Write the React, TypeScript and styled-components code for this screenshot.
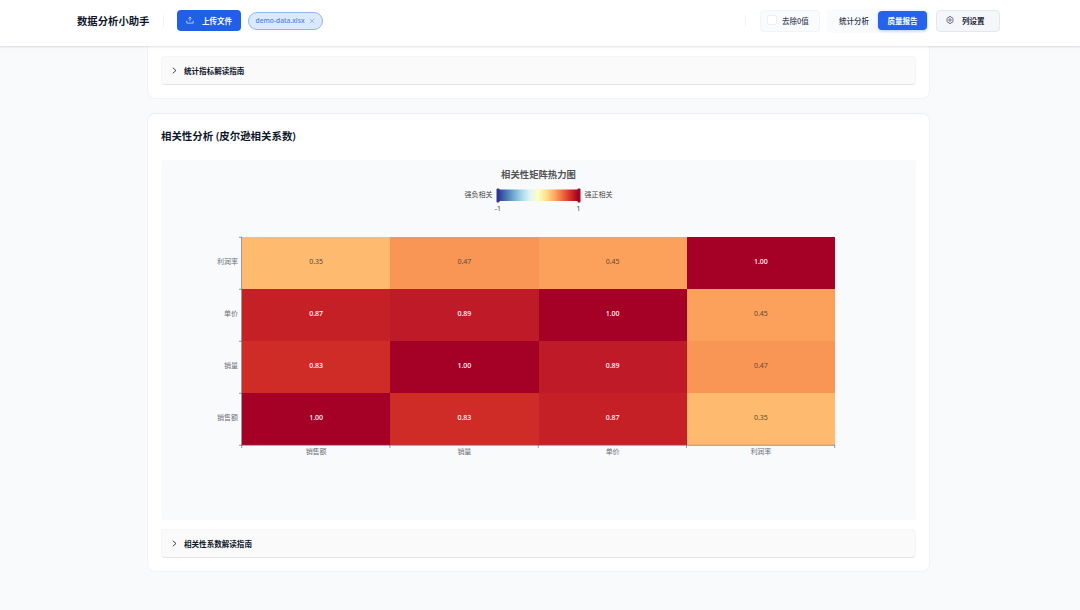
import React from "react";
import styled, { createGlobalStyle, css } from "styled-components";

const sans = '"Noto Sans", "Noto Sans CJK SC", sans-serif';

const GlobalStyle = createGlobalStyle`
  * { box-sizing: border-box; }
  body {
    margin: 0;
    background: #f8fafc;
    color: #0f172a;
    font-family: ${sans};
    overflow: hidden;
  }
  button { font-family: inherit; margin: 0; }
`;

const Page = styled.div`
  height: 610px;
  display: flex;
  flex-direction: column;
  overflow: hidden;
`;

const Header = styled.header`
  height: 46px;
  flex: none;
  display: flex;
  align-items: center;
  justify-content: space-between;
  padding: 0 80px 5px 77px;
  background: #fff;
  box-shadow: 0 1px 2px rgba(15, 23, 42, 0.14);
  z-index: 1;
`;

const Group = styled.div`
  display: flex;
  align-items: center;
`;

const Brand = styled.h1`
  margin: 0;
  width: 86px;
  font-size: 10.35px;
  line-height: 16px;
  font-weight: 600;
  white-space: nowrap;
`;

const Divider = styled.span<{ $gap: number }>`
  width: 1px;
  height: 12px;
  margin-right: ${(p) => p.$gap}px;
  background: #eff2f6;
`;

const UploadButton = styled.button`
  width: 64px;
  height: 21px;
  display: flex;
  align-items: center;
  gap: 8px;
  padding: 0 0 1px 9px;
  border: 0;
  border-radius: 4px;
  background: #2060e8;
  color: #fff;
  font-size: 7.5px;
  font-weight: 700;
  white-space: nowrap;
`;

const FileTag = styled.span`
  width: 75px;
  height: 18px;
  margin-left: 7px;
  display: flex;
  align-items: center;
  justify-content: space-between;
  padding: 0 7px 0 6.5px;
  border: 1px solid #91b4f6;
  border-radius: 9px;
  background: #dbe9fe;
  color: #4d80ec;
  font-size: 6.7px;
  font-weight: 500;
  white-space: nowrap;
`;

const CheckField = styled.label`
  width: 60px;
  height: 22px;
  display: flex;
  align-items: center;
  gap: 5px;
  padding: 0 0 1px 6px;
  border: 1px solid #f1f4f8;
  border-radius: 4px;
  background: #fafbfd;
  color: #414b5b;
  font-family: "Noto Sans CJK SC", sans-serif;
  font-size: 7.5px;
  font-weight: 500;
  white-space: nowrap;
`;

const Box = styled.span`
  width: 10px;
  height: 10px;
  border: 1px solid #edf0f4;
  border-radius: 2px;
  background: #fff;
`;

const Tabs = styled.div`
  width: 101px;
  height: 24px;
  display: flex;
  align-items: center;
  margin-left: 7px;
  padding-left: 1px;
  border-radius: 4px;
  background: #f9fbfd;
`;

const Tab = styled.button<{ $active?: boolean }>`
  width: ${(p) => (p.$active ? 49 : 50)}px;
  height: 19px;
  padding: 0 0 1px;
  padding-left: ${(p) => (p.$active ? 0 : 2)}px;
  border: 0;
  border-radius: 4px;
  background: transparent;
  color: #2f3949;
  font-size: 7.5px;
  font-weight: 500;
  ${(p) =>
    p.$active &&
    css`
      background: #2563eb;
      color: #fff;
      font-weight: 700;
      box-shadow: 0 1px 3px rgba(37, 99, 235, 0.3);
    `}
`;

const ColumnsButton = styled.button`
  width: 64px;
  height: 22px;
  display: flex;
  align-items: center;
  gap: 8px;
  margin-left: 8px;
  padding: 0 0 1px 9px;
  border: 1px solid #e2e8f0;
  border-radius: 4px;
  background: #f4f6f9;
  color: #172033;
  font-size: 7.5px;
  font-weight: 600;
  white-space: nowrap;
`;

const Main = styled.main`
  width: 783px;
  margin-left: 147px;
  display: flex;
  flex-direction: column;
  gap: 14px;
`;

const Card = styled.section<{ $clipped?: boolean }>`
  display: flex;
  flex-direction: column;
  padding: ${(p) => (p.$clipped ? "10px 13px 13px" : "13px 13px 13px")};
  border: 1px solid #f0f3f7;
  border-top: ${(p) => (p.$clipped ? "0" : "1px solid #e9edf2")};
  border-radius: ${(p) => (p.$clipped ? "0 0 8px 8px" : "8px")};
  background: #fff;
`;

const CardTitle = styled.h2`
  height: 18px;
  margin: 0 0 15px;
  font-size: 10.45px;
  line-height: 18px;
  font-weight: 600;
`;

const Guide = styled.div<{ $gap?: number }>`
  height: 29px;
  display: flex;
  align-items: center;
  gap: 7px;
  margin-top: ${(p) => p.$gap ?? 0}px;
  padding: 0 0 1px 10px;
  border: 1px solid #f5f5f6;
  border-bottom-color: #e4e5e7;
  border-radius: 4px;
  background: #fafafa;
  font-size: 7.55px;
  font-weight: 600;
`;

const ChartSvg = styled.svg`
  display: block;
  width: 755px;
  height: 360px;
  border-radius: 4px;
  background: #f8fafc;
  font-family: ${sans};
  font-size: 7px;
  text-anchor: middle;
`;

const UploadIcon = () => (
  <svg width="8" height="8" viewBox="0 0 8 8" fill="none" stroke="#dbe7ff" strokeWidth="0.75">
    <path d="M0.8 4.7v2.4h6.4V4.7M4 5.2V1M2.5 2.5 4 1l1.5 1.5" />
  </svg>
);

const CloseIcon = () => (
  <svg width="6" height="6" viewBox="0 0 6 6" stroke="#91acd9" strokeWidth="0.8">
    <path d="m.8.8 4.4 4.4M5.2.8.8 5.2" />
  </svg>
);

const GearIcon = () => (
  <svg width="8" height="8" viewBox="0 0 8 8" fill="none" stroke="#4b5563" strokeWidth="0.8">
    <path d="M3.1.6h1.8l.4.9 1 .1.9 1.5-.6.9.6.9-.9 1.5-1 .1-.4.9H3.1l-.4-.9-1-.1L.8 4.9 1.4 4 .8 3.1l.9-1.5 1-.1z" />
    <circle cx="4" cy="4" r="1.2" />
  </svg>
);

const Chevron = () => (
  <svg width="5" height="7" viewBox="0 0 5 7" fill="none" stroke="#30343b" strokeWidth="0.9">
    <path d="M.8.8 4 3.5.8 6.2" />
  </svg>
);

const LABELS = ["销售额", "销量", "单价", "利润率"];
const MATRIX = [
  [0.35, 0.47, 0.45, 1],
  [0.87, 0.89, 1, 0.45],
  [0.83, 1, 0.89, 0.47],
  [1, 0.83, 0.87, 0.35],
];
const COLORS: Record<string, string> = {
  "0.35": "#feba6e",
  "0.45": "#fba15c",
  "0.47": "#f99656",
  "0.83": "#cf2b27",
  "0.87": "#c62027",
  "0.89": "#be1a27",
  "1.00": "#a50026",
};
const SCALE = ["#313695", "#4575b4", "#74add1", "#abd9e9", "#e0f3f8", "#ffffbf", "#fee090", "#fdae61", "#f46d43", "#d73027", "#a50026"];

const LEFT = 81;
const TOP = 77;
const CELL_W = 148.25;
const CELL_H = 52;

const Heatmap = () => (
  <ChartSvg viewBox="0 0 755 360">
    <defs>
      <linearGradient id="scale">
        {SCALE.map((c, i) => (
          <stop key={c} offset={i / (SCALE.length - 1)} stopColor={c} />
        ))}
      </linearGradient>
    </defs>
    <text x="377.5" y="17.5" fontSize="9.35" fontWeight="600" fill="#555">
      相关性矩阵热力图
    </text>
    <text x="317.5" y="37" fill="#444">强负相关</text>
    <text x="437.5" y="37" fill="#444">强正相关</text>
    <rect x="337" y="29.5" width="80" height="11.5" fill="url(#scale)" />
    <rect x="335.5" y="28.5" width="3" height="14" rx="1" fill="#313695" />
    <rect x="416.5" y="28.5" width="3" height="14" rx="1" fill="#a50026" />
    <text x="337" y="51" fill="#444">-1</text>
    <text x="417.5" y="51" fill="#444">1</text>
    {MATRIX.map((row, r) =>
      row.map((v, c) => {
        const value = v.toFixed(2);
        return (
          <g key={`${r}-${c}`}>
            <rect
              x={LEFT + c * CELL_W}
              y={TOP + r * CELL_H}
              width={CELL_W}
              height={CELL_H}
              fill={COLORS[value]}
              shapeRendering="crispEdges"
            />
            <text
              x={LEFT + (c + 0.5) * CELL_W}
              y={TOP + r * CELL_H + 27.4}
              fill={v > 0.5 ? "#fff" : "#5c4a3c"}
              fontWeight={v > 0.5 ? 500 : 400}
            >
              {value}
            </text>
          </g>
        );
      })
    )}
    <path
      d={`M${LEFT - 0.5} ${TOP}v208.3h593.5${[0, 1, 2, 3, 4]
        .map((i) => `M${LEFT - 3} ${TOP + i * CELL_H + 0.3}h3M${LEFT + i * CELL_W - 0.3} ${TOP + 208}v3`)
        .join("")}`}
      fill="none"
      stroke="#6e7079"
      strokeWidth="0.7"
    />
    {LABELS.map((label, i) => (
      <g key={label} fill="#6e7079">
        <text x="77" y={TOP + (3 - i) * CELL_H + 27.4} textAnchor="end">{label}</text>
        <text x={LEFT + (i + 0.5) * CELL_W} y="294">{label}</text>
      </g>
    ))}
  </ChartSvg>
);

export default function App() {
  return (
    <Page>
      <GlobalStyle />
      <Header>
        <Group>
          <Brand>数据分析小助手</Brand>
          <Divider $gap={13} />
          <UploadButton><UploadIcon />上传文件</UploadButton>
          <FileTag>demo-data.xlsx<CloseIcon /></FileTag>
        </Group>
        <Group>
          <Divider $gap={14} />
          <CheckField><Box />去除0值</CheckField>
          <Tabs>
            <Tab>统计分析</Tab>
            <Tab $active>质量报告</Tab>
          </Tabs>
          <ColumnsButton><GearIcon />列设置</ColumnsButton>
        </Group>
      </Header>
      <Main>
        <Card $clipped>
          <Guide><Chevron />统计指标解读指南</Guide>
        </Card>
        <Card>
          <CardTitle>相关性分析 (皮尔逊相关系数)</CardTitle>
          <Heatmap />
          <Guide $gap={9}><Chevron />相关性系数解读指南</Guide>
        </Card>
      </Main>
    </Page>
  );
}
